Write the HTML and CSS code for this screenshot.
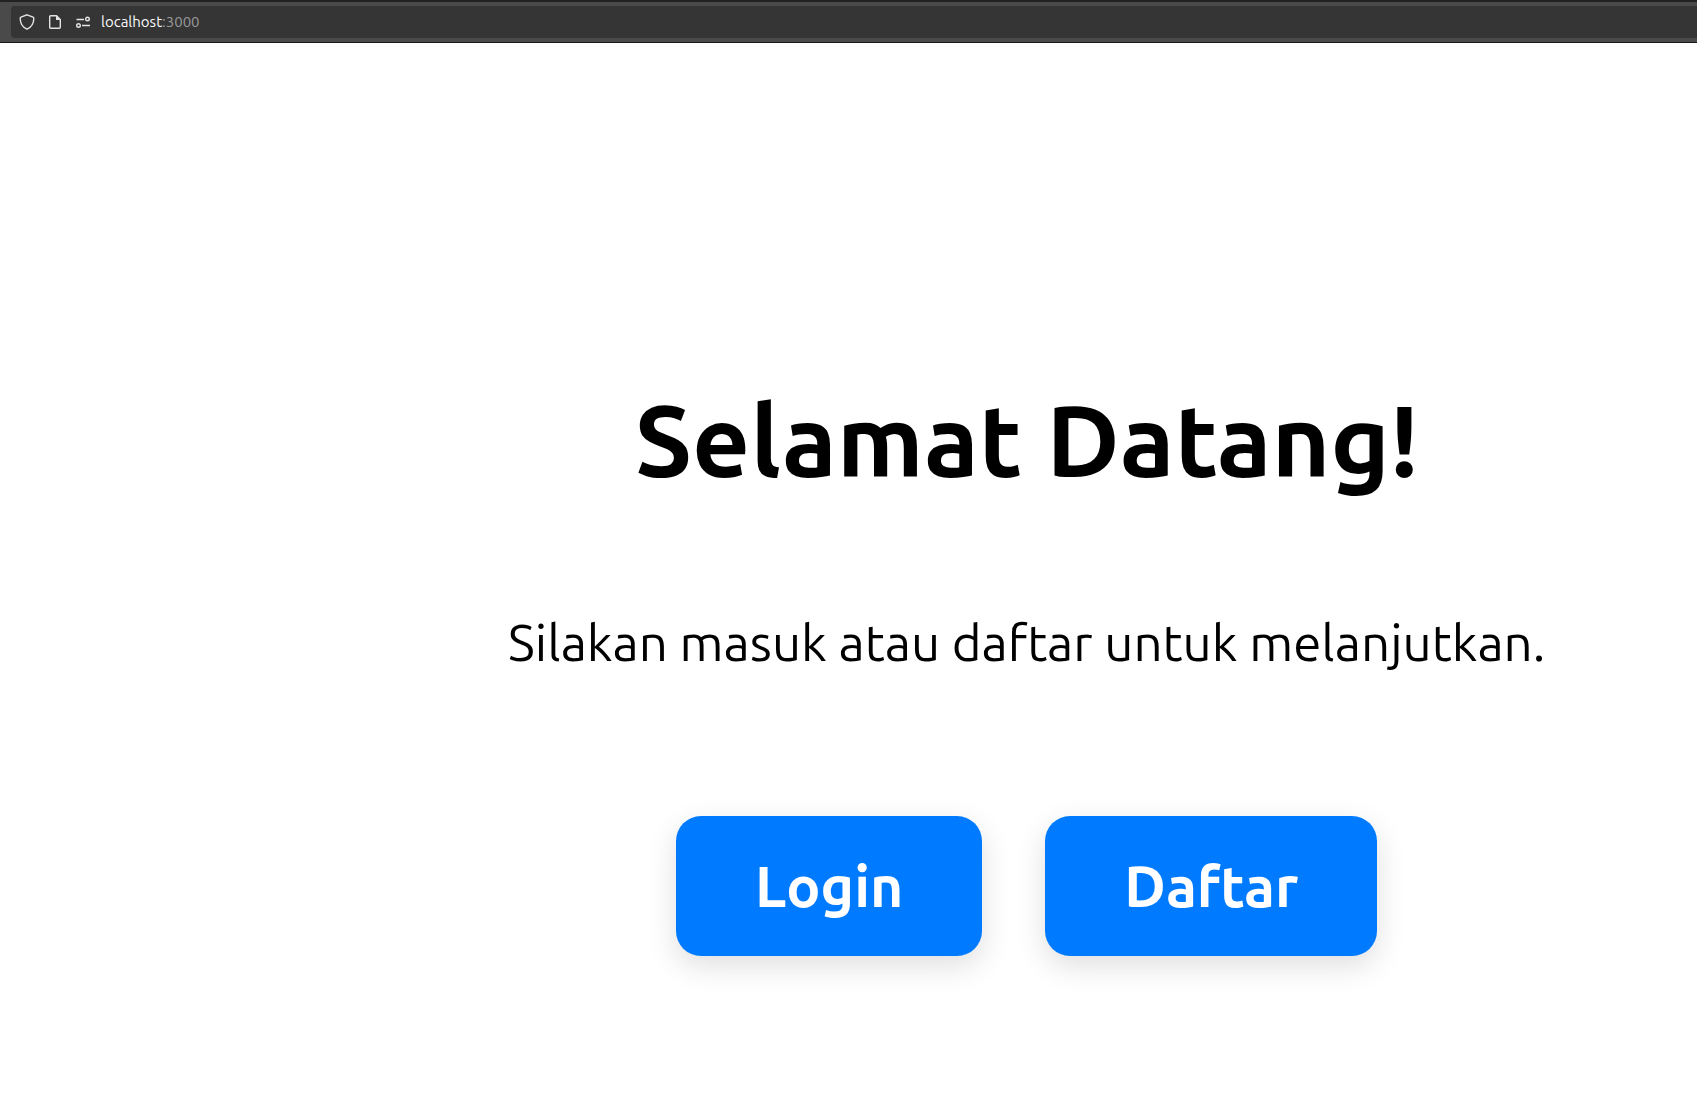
FILE: index.html
```html
<!DOCTYPE html>
<html lang="id">
<head>
  <meta charset="utf-8">
  <meta name="viewport" content="width=device-width, initial-scale=1">
  <title>Selamat Datang</title>
  <link rel="stylesheet" href="styles.css">
</head>
<body>
  <header class="toolbar">
    <div class="address">
      <svg class="icon" viewBox="0 0 16 16" aria-hidden="true"><path d="M8 .8 14.1 3.2Q14.8 3.5 14.8 4.3C14.8 9 12.2 13.3 8 15.2 3.8 13.3 1.2 9 1.2 4.3Q1.2 3.5 1.9 3.2Z"/></svg>
      <svg class="icon" viewBox="0 0 16 16" aria-hidden="true"><path d="M3.7 1.7H9.5L13.3 5.5V13.3Q13.3 14.3 12.3 14.3H3.7Q2.7 14.3 2.7 13.3V2.7Q2.7 1.7 3.7 1.7Z"/><path class="fill" d="M9 1.5 13.5 6H9Z"/></svg>
      <svg class="icon" viewBox="0 0 16 16" aria-hidden="true"><path d="M1.5 5.5H9M7 11.5H15"/><circle cx="12.5" cy="5" r="1.8"/><circle cx="3.5" cy="11.5" r="1.8"/></svg>
      <span class="url">localhost<span class="port">:3000</span></span>
    </div>
  </header>
  <main class="welcome">
    <h1 class="title">Selamat Datang!</h1>
    <p class="lead">Silakan masuk atau daftar untuk melanjutkan.</p>
    <div class="actions">
      <button class="button" type="button">Login</button>
      <button class="button" type="button">Daftar</button>
    </div>
  </main>
</body>
</html>
```
FILE: styles.css
```css
* {
  box-sizing: border-box;
}

body {
  margin: 0;
  background: #fff;
  color: #000;
  font-family: Ubuntu, "Noto Sans", sans-serif;
}

.toolbar {
  padding: 4px 0 4px 11px;
  background: #4a4a4a;
  border-top: 2px solid #222;
  border-bottom: 1px solid #18181a;
}

.address {
  display: flex;
  align-items: center;
  gap: 12px;
  height: 32px;
  padding-left: 8px;
  background: #353535;
  border-radius: 4px 0 0 4px;
}

.icon {
  flex: none;
  width: 16px;
  height: 16px;
  fill: none;
  stroke: #e4e4e4;
  stroke-width: 1.4;
}

.icon .fill {
  fill: #e4e4e4;
  stroke: none;
}

.url {
  margin-left: -2px;
  color: #fbfbfb;
  font-size: 15px;
  line-height: 20px;
}

.port {
  color: #999;
}

.welcome {
  display: flex;
  flex-direction: column;
  align-items: center;
  padding: 333px 0 144px 21%;
}

.title {
  margin: 0;
  font-size: 101px;
  font-weight: 700;
  line-height: 128px;
  white-space: nowrap;
}

.lead {
  margin: 102px 0 138px;
  font-size: 51px;
  font-weight: 400;
  line-height: 72px;
  white-space: nowrap;
}

.actions {
  display: flex;
  gap: 63px;
}

.button {
  padding: 34px 79px;
  border: 0;
  border-radius: 25px;
  background: #007bff;
  box-shadow: 0 10px 30px rgba(0, 0, 0, 0.13);
  color: #fff;
  font-family: inherit;
  font-size: 57px;
  font-weight: 700;
  line-height: 72px;
}
```
